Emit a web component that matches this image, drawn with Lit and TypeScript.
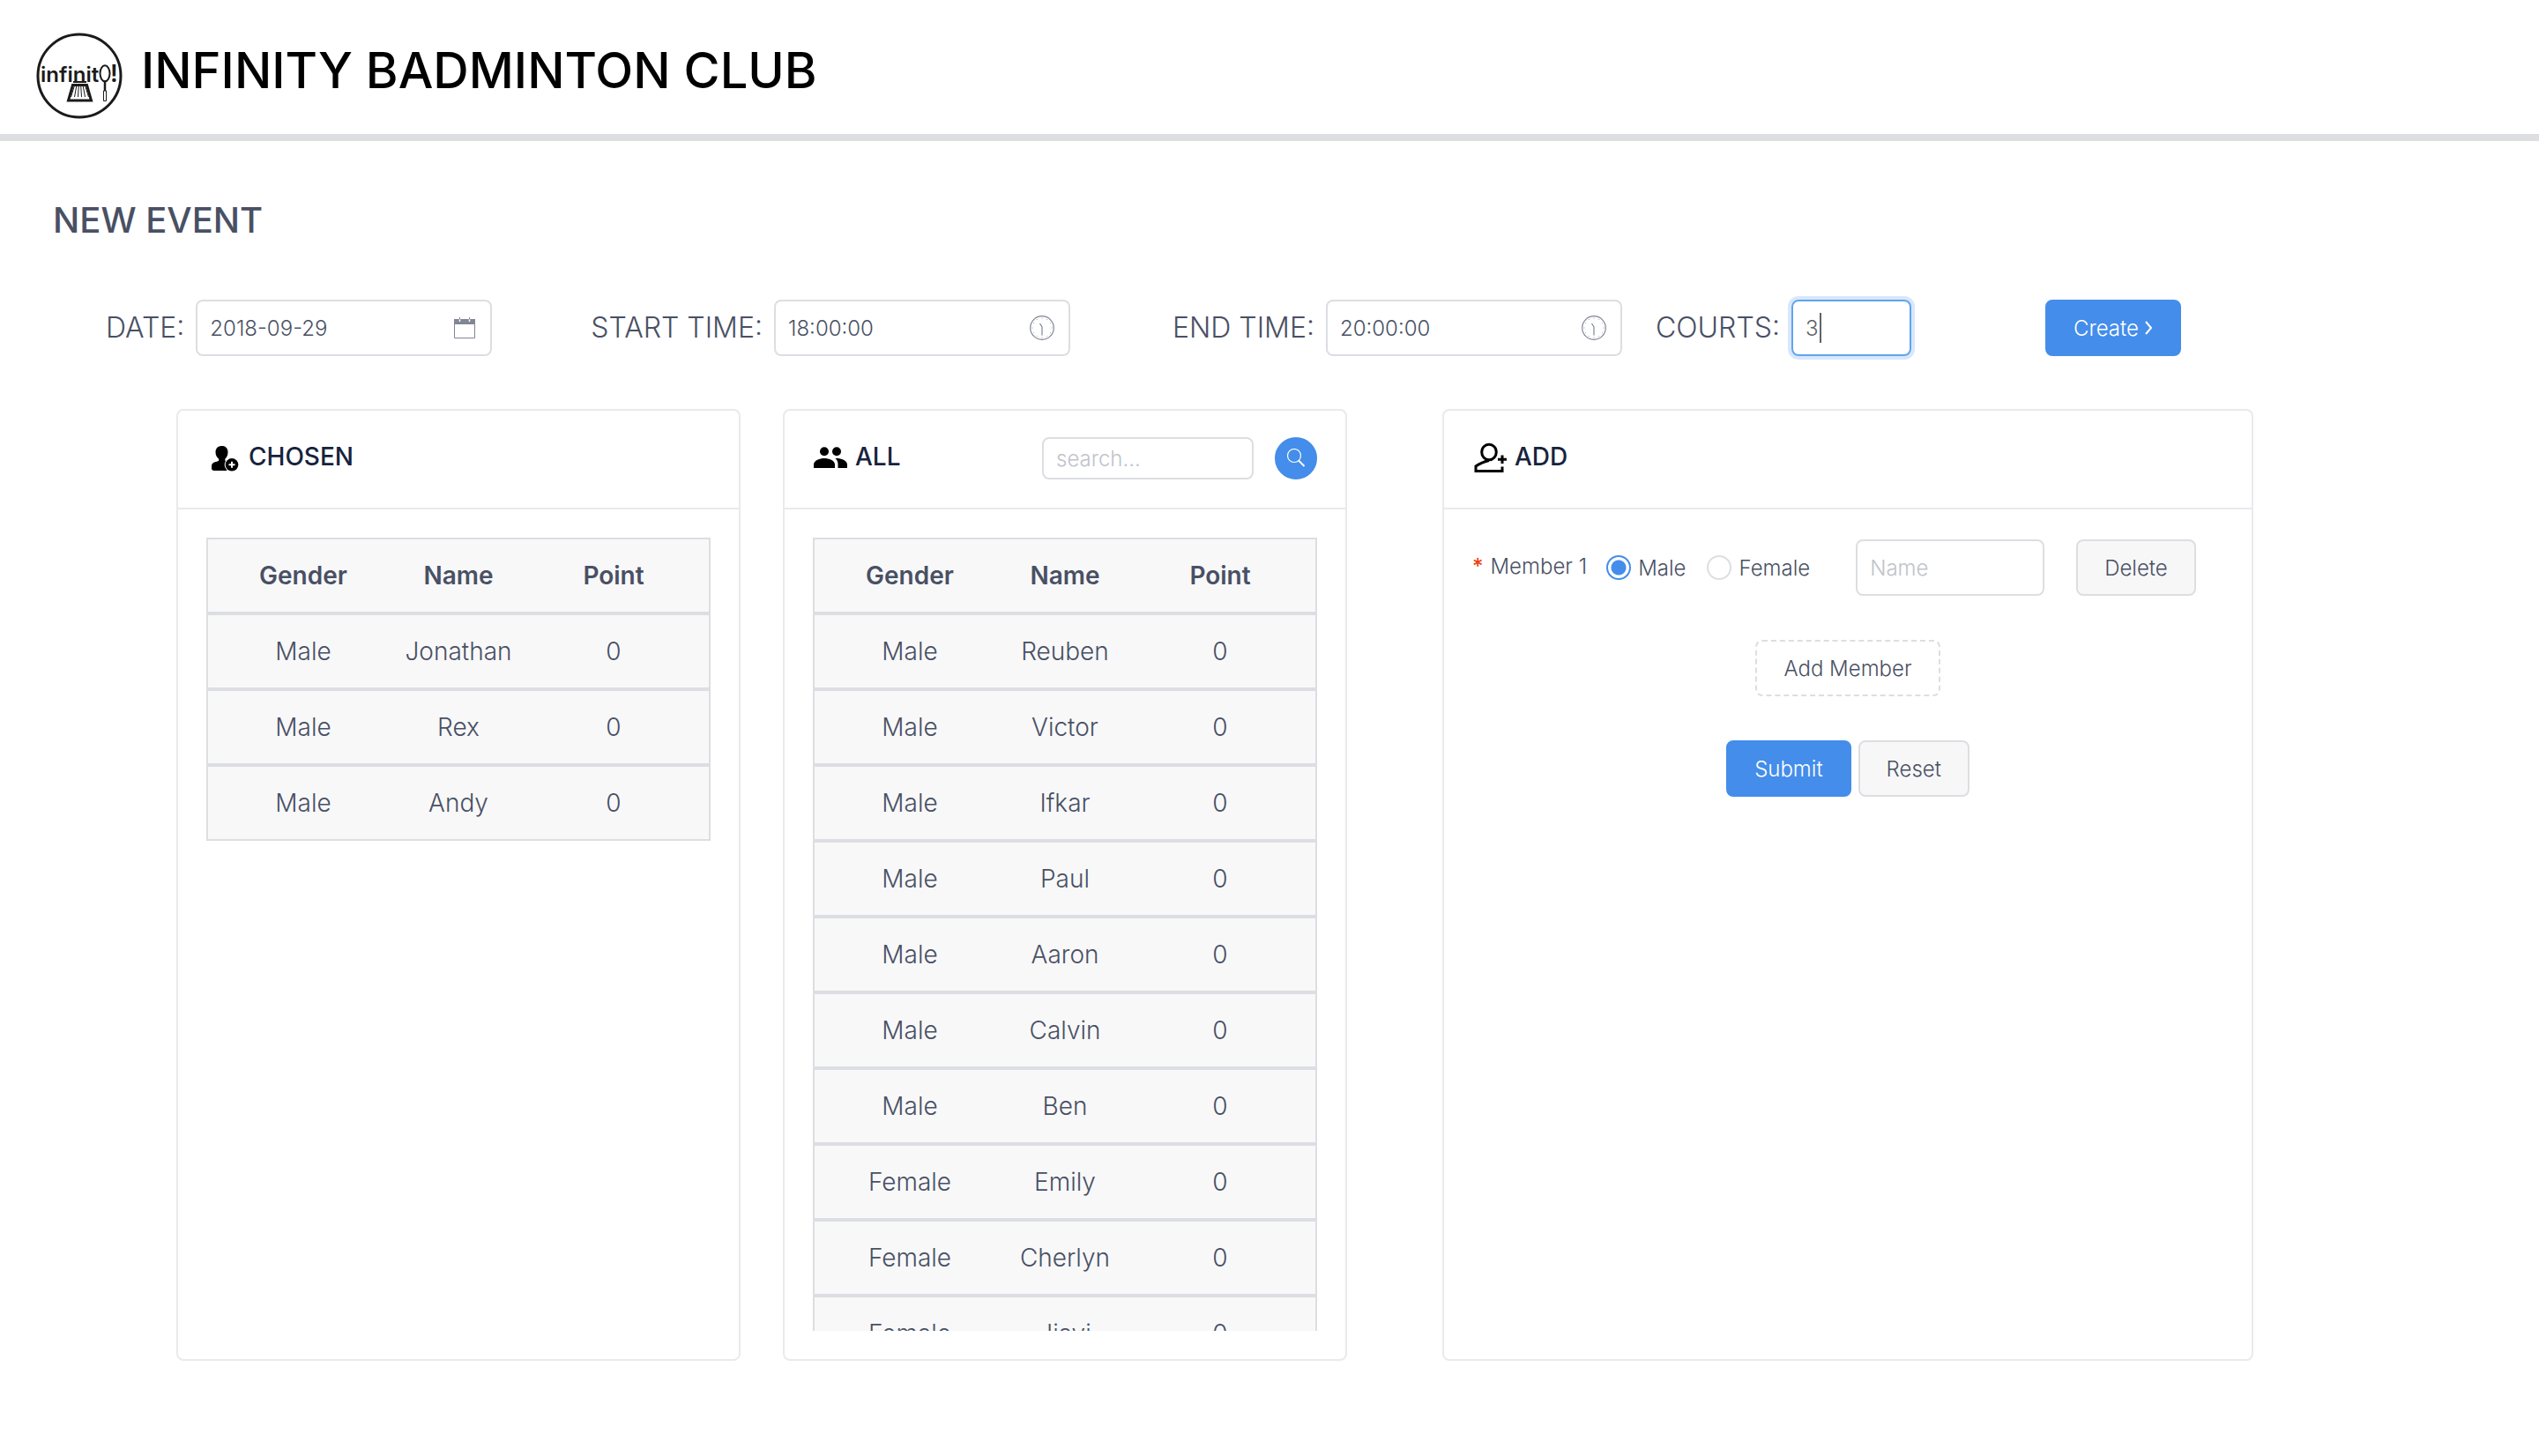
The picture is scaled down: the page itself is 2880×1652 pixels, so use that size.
import { LitElement, html, css, svg } from "lit";
import { customElement, property } from "lit/decorators.js";

interface Member {
  gender: string;
  name: string;
  point: number;
}

const CHOSEN: Member[] = [
  { gender: "Male", name: "Jonathan", point: 0 },
  { gender: "Male", name: "Rex", point: 0 },
  { gender: "Male", name: "Andy", point: 0 },
];

const ALL: Member[] = [
  { gender: "Male", name: "Reuben", point: 0 },
  { gender: "Male", name: "Victor", point: 0 },
  { gender: "Male", name: "Ifkar", point: 0 },
  { gender: "Male", name: "Paul", point: 0 },
  { gender: "Male", name: "Aaron", point: 0 },
  { gender: "Male", name: "Calvin", point: 0 },
  { gender: "Male", name: "Ben", point: 0 },
  { gender: "Female", name: "Emily", point: 0 },
  { gender: "Female", name: "Cherlyn", point: 0 },
  { gender: "Female", name: "Jiayi", point: 0 },
];

const feathers = [-10, -6, -2, 2, 6, 10];

const logo = svg`
  <svg class="logo" viewBox="0 0 100 100" aria-hidden="true">
    <circle cx="50" cy="50" r="47" fill="#fff" stroke="#1c1b1b" stroke-width="3" />
    <text x="6" y="57" font-size="24" font-weight="600" fill="#1c1b1b">infinit</text>
    <text x="85" y="57" font-size="27" font-weight="600" fill="#1c1b1b">!</text>
    <path d="M43 57h15" stroke="#1c1b1b" stroke-width="2" />
    <path d="M42.500 60.500h16l5 17.500h-26z" fill="#fff" stroke="#1c1b1b" stroke-width="3" />
    <g stroke="#1c1b1b" stroke-width="1">
      ${feathers.map((x) => svg`<path d="M${50.5 + x * 0.6} 61L${50.5 + x} 74" />`)}
    </g>
    <ellipse cx="79" cy="47.300" rx="5.500" ry="9" fill="#fff" stroke="#1c1b1b" stroke-width="2" />
    <path d="M79 56v11" stroke="#1c1b1b" stroke-width="2.500" />
    <path d="M77.500 67h3v11.500h-3z" fill="#fff" stroke="#1c1b1b" stroke-width="1" />
  </svg>`;

const calendarIcon = svg`
  <svg class="field-icon" viewBox="0 0 28 28" aria-hidden="true" fill="none" stroke="#808695">
    <path d="M3.500 4.500h23v21h-23z" stroke-width="1" />
    <path d="M3 4h24v6H3z" fill="#808695" stroke="none" />
    <path d="M9.500 4v3M20.500 4v3" stroke="#fff" stroke-width="1.500" />
    <path d="M9.500 2v2.500M20.500 2v2.500" stroke-width="1" />
  </svg>`;

const clockIcon = svg`
  <svg class="field-icon" viewBox="0 0 28 28" aria-hidden="true" fill="none" stroke="#808695">
    <circle cx="14" cy="14" r="13.300" stroke-width="1.200" />
    <path d="M11.500 9l2.500 4v9.500" stroke-width="1.200" />
    <path d="M14 2.500v1M14 24.500v1M2.500 14h1M24.500 14h1M8 4l.5.8M20 4l-.5.8M4 8l.8.5M24 8l-.8.5M4 20l.8-.5M24 20l-.8-.5M8 24l.5-.8M20 24l-.5-.8" stroke-width=".8" />
  </svg>`;

const chosenIcon = svg`
  <svg class="title-icon" viewBox="0 0 40 36" aria-hidden="true">
    <path d="M17.500 6c4.500 0 7 3 7 7 0 3.500-1.200 6-3.200 7.800v1.700c1.500 1.500 4.700 1.800 4.700 4.500v7H9c-2 0-3-.8-3-3v-2c0-3 1.500-4.300 4.500-5 2-.5 3.500-.8 3.700-1.800v-1.400C12 19 10.500 16.500 10.500 13c0-4 2.500-7 7-7z" fill="#000" />
    <circle cx="29" cy="27.300" r="8.300" fill="#fff" />
    <circle cx="29" cy="27.300" r="7.300" fill="#000" />
    <path d="M29 23.800v7M25.500 27.300h7" stroke="#fff" stroke-width="2" />
  </svg>`;

const allIcon = svg`
  <svg class="title-icon" viewBox="0 0 40 36" aria-hidden="true" fill="#000">
    <g transform="translate(1 7)">
      <circle cx="12" cy="5.200" r="5" />
      <circle cx="26" cy="5.200" r="5" />
      <path d="M0 24v-4c0-4.500 7-7 12-7s12 2.500 12 7v4z" />
      <path d="M26 13c5 0 12 2.500 12 7v4H27.500v-4c0-3-1-5-3-6.900z" />
    </g>
  </svg>`;

const addIcon = svg`
  <svg class="title-icon" viewBox="0 0 40 36" aria-hidden="true" fill="none" stroke="#000" stroke-width="3">
    <ellipse cx="19" cy="13" rx="8.300" ry="8.800" />
    <path d="M19 22.500C13 24 8 26 4 29v5.500h30v-5" />
    <path d="M34 16.500v9.500M29 21.300h10" />
  </svg>`;

const searchIcon = svg`
  <svg class="search-icon" viewBox="0 0 22 22" aria-hidden="true" fill="none" stroke="#fff">
    <circle cx="9" cy="8" r="7.500" stroke-width="1.200" />
    <path d="M14 13.500L20.500 20" stroke-width="2" />
  </svg>`;

@customElement("member-table")
export class MemberTable extends LitElement {
  @property({ attribute: false }) members: Member[] = [];

  static styles = css`
    :host {
      display: block;
    }
    .members,
    .group {
      display: block;
    }
    .members {
      font-size: 28px;
      line-height: 42px;
      color: #495064;
    }
    .row {
      display: grid;
      grid-template-columns: repeat(3, 1fr);
      padding: 20px;
      border: 2px solid #dcdee2;
      background: #f8f8f9;
    }
    .cell {
      padding: 0;
      font-weight: 300;
      text-align: center;
    }
    .head {
      font-weight: 600;
    }
  `;

  render() {
    return html`
      <table class="members">
        <thead class="group">
          <tr class="row">
            <th class="cell head" scope="col">Gender</th>
            <th class="cell head" scope="col">Name</th>
            <th class="cell head" scope="col">Point</th>
          </tr>
        </thead>
        <tbody class="group">
          ${this.members.map(
            (m) => html`<tr class="row">
              <td class="cell">${m.gender}</td>
              <td class="cell">${m.name}</td>
              <td class="cell">${m.point}</td>
            </tr>`
          )}
        </tbody>
      </table>
    `;
  }
}

@customElement("app-root")
export class AppRoot extends LitElement {
  static styles = css`
    :host {
      display: block;
      min-height: 100vh;
      background: #fff;
      color: #495064;
      font-family: Inter, "Liberation Sans", sans-serif;
      font-size: 24px;
      font-weight: 300;
    }
    * {
      box-sizing: border-box;
    }
    .header {
      display: flex;
      align-items: center;
      gap: 20px;
      height: 160px;
      padding: 20px 40px 0;
      border-bottom: 8px solid #dcdee2;
    }
    .logo {
      width: 100px;
      height: 100px;
    }
    .club {
      margin: 0;
      padding-bottom: 12px;
      font-size: 56px;
      line-height: 72px;
      font-weight: 500;
      color: #000;
    }
    .page-title {
      margin: 0;
      padding: 60px 60px 0;
      font-size: 40px;
      line-height: 60px;
      font-weight: 500;
    }
    .event-form {
      display: flex;
      align-items: center;
      padding: 60px 120px;
    }
    .field {
      display: flex;
      align-items: center;
      gap: 13px;
      flex-shrink: 0;
    }
    .label {
      font-size: 32px;
      line-height: 48px;
    }
    .box {
      display: flex;
      align-items: center;
      width: 336px;
      height: 64px;
      padding: 0 16px 0 14px;
      border: 2px solid #dcdee2;
      border-radius: 8px;
    }
    .input {
      flex: 1;
      min-width: 0;
      padding: 0;
      border: 0;
      outline: 0;
      background: none;
      color: inherit;
      font: inherit;
    }
    .input::placeholder {
      color: #c0c3c9;
      opacity: 1;
    }
    .field-icon {
      width: 28px;
      height: 28px;
    }
    .start {
      margin-left: 112px;
    }
    .end {
      margin-left: 116px;
    }
    .courts {
      margin-left: 38px;
    }
    .small {
      width: 136px;
      border-color: #5ea4f0;
      box-shadow: 0 0 0 4px #d8e7fb;
      color: #606266;
    }
    .caret {
      width: 2px;
      height: 34px;
      background: #606266;
    }
    .digit {
      flex: none;
      width: 16px;
    }
    .button {
      height: 64px;
      padding: 0 30px;
      border: 2px solid #dcdee2;
      border-radius: 8px;
      background: #f7f7f7;
      color: inherit;
      font: inherit;
      white-space: nowrap;
    }
    .primary {
      border-color: #448dea;
      background: #448dea;
      color: #fff;
    }
    .dashed {
      border-style: dashed;
      background: #fff;
    }
    .create {
      display: flex;
      align-items: center;
      gap: 6px;
      margin-left: 152px;
    }
    .chevron {
      width: 10px;
      height: 16px;
    }
    .cards {
      display: grid;
      grid-template-columns: 640fr 640fr 980fr;
      gap: 48px;
      padding: 0 324px 108px 200px;
    }
    .card {
      border: 2px solid #e8eaec;
      border-radius: 8px;
    }
    .add-card {
      margin-left: 60px;
    }
    .card-head {
      display: flex;
      align-items: center;
      height: 112px;
      padding: 0 32px 2px;
      border-bottom: 2px solid #e8eaec;
    }
    .card-title {
      display: flex;
      align-items: center;
      gap: 8px;
      flex: 1;
      margin: 0;
      padding-bottom: 4px;
      font-size: 28px;
      line-height: 40px;
      font-weight: 500;
      color: #17233d;
    }
    .title-icon {
      width: 40px;
      height: 36px;
    }
    .search {
      width: 240px;
      height: 48px;
    }
    .round {
      display: flex;
      align-items: center;
      justify-content: center;
      width: 48px;
      height: 48px;
      margin-left: 24px;
      padding: 0;
      border-radius: 50%;
    }
    .search-icon {
      width: 22px;
      height: 22px;
    }
    .card-body {
      height: 964px;
      padding: 32px;
    }
    .scroller {
      height: 100%;
      overflow: hidden;
    }
    .member-form {
      display: flex;
      flex-direction: column;
      align-items: center;
      gap: 50px;
      padding-top: 2px;
    }
    .member-row {
      display: flex;
      align-items: center;
      align-self: stretch;
      white-space: nowrap;
    }
    .required,
    .member-label {
      padding-bottom: 4px;
    }
    .required {
      margin-right: 8px;
      font-weight: 500;
      color: #ed4014;
    }
    .member-label {
      margin-right: 22px;
    }
    .choice {
      display: flex;
      align-items: center;
      gap: 8px;
      margin-right: 24px;
    }
    .radio {
      appearance: none;
      width: 28px;
      height: 28px;
      margin: 0;
      border: 2px solid #dcdee2;
      border-radius: 50%;
      background: #fff;
    }
    .radio:checked {
      border-color: #448dea;
      background: radial-gradient(circle, #448dea 8px, #fff 9px);
    }
    .name {
      width: 214px;
      margin-left: 28px;
      margin-right: 36px;
    }
    .actions {
      display: flex;
      gap: 8px;
    }
  `;

  render() {
    return html`
      <header class="header">
        ${logo}
        <h1 class="club">INFINITY BADMINTON CLUB</h1>
      </header>
      <main>
        <h2 class="page-title">NEW EVENT</h2>
        <form class="event-form">
          <div class="field">
            <label class="label" for="date">DATE:</label>
            <div class="box"><input class="input" id="date" type="text" value="2018-09-29" />${calendarIcon}</div>
          </div>
          <div class="field start">
            <label class="label" for="start">START TIME:</label>
            <div class="box"><input class="input" id="start" type="text" value="18:00:00" />${clockIcon}</div>
          </div>
          <div class="field end">
            <label class="label" for="end">END TIME:</label>
            <div class="box"><input class="input" id="end" type="text" value="20:00:00" />${clockIcon}</div>
          </div>
          <div class="field courts">
            <label class="label" for="courts">COURTS:</label>
            <div class="box small"><input class="input digit" id="courts" type="text" value="3" /><span class="caret"></span></div>
          </div>
          <button class="button primary create" type="button">
            Create
            <svg class="chevron" viewBox="0 0 10 16" aria-hidden="true" fill="none" stroke="#fff" stroke-width="2">
              <path d="M2 1l6 7-6 7" />
            </svg>
          </button>
        </form>
        <div class="cards">
          <section class="card">
            <div class="card-head"><h3 class="card-title">${chosenIcon}CHOSEN</h3></div>
            <div class="card-body">
              <div class="scroller"><member-table .members=${CHOSEN}></member-table></div>
            </div>
          </section>
          <section class="card">
            <div class="card-head">
              <h3 class="card-title">${allIcon}ALL</h3>
              <div class="box search"><input class="input" type="text" placeholder="search..." aria-label="search" /></div>
              <button class="button primary round" type="button" aria-label="search">${searchIcon}</button>
            </div>
            <div class="card-body">
              <div class="scroller"><member-table .members=${ALL}></member-table></div>
            </div>
          </section>
          <section class="card add-card">
            <div class="card-head"><h3 class="card-title">${addIcon}ADD</h3></div>
            <div class="card-body">
              <form class="member-form">
                <div class="member-row">
                  <span class="required">*</span>
                  <label class="member-label" for="member-name">Member 1</label>
                  <label class="choice"><input class="radio" type="radio" name="gender" checked />Male</label>
                  <label class="choice"><input class="radio" type="radio" name="gender" />Female</label>
                  <div class="box name"><input class="input" id="member-name" type="text" placeholder="Name" /></div>
                  <button class="button" type="button">Delete</button>
                </div>
                <button class="button dashed" type="button">Add Member</button>
                <div class="actions">
                  <button class="button primary" type="button">Submit</button>
                  <button class="button" type="button">Reset</button>
                </div>
              </form>
            </div>
          </section>
        </div>
      </main>
    `;
  }
}
